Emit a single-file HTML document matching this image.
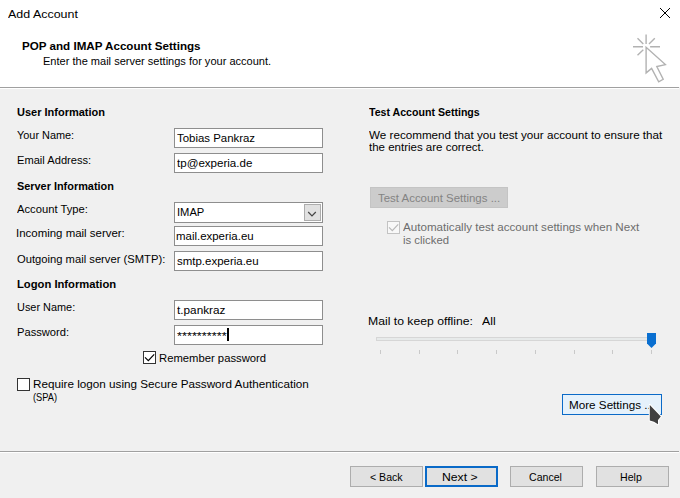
<!DOCTYPE html>
<html><head><meta charset="utf-8"><title>Add Account</title>
<style>
html,body{margin:0;padding:0;}
body{width:680px;height:498px;position:relative;overflow:hidden;background:#f0f0f0;font-family:"Liberation Sans",sans-serif;font-size:12px;color:#000;}
.hdr{position:absolute;left:0;top:0;width:680px;height:87px;background:#fff;}
.hl{position:absolute;left:0;top:87px;width:679px;height:1px;background:#a0a0a0;box-shadow:0 1px 0 #fff;}
.t{position:absolute;white-space:nowrap;transform-origin:0 0;z-index:2;}
.in{position:absolute;left:174px;width:147px;height:18px;border:1px solid #8e8e8e;background:#fff;}
.btn{position:absolute;height:19px;border:1px solid #adadad;background:#e1e1e1;}
.cb{position:absolute;width:11px;height:11px;border:1px solid #333;background:#fff;}
.cb svg{position:absolute;left:0;top:0;}
.tk{position:absolute;top:350px;width:1px;height:4px;background:#c9c9c9;}
</style></head><body>
<div class="hdr"></div><div class="hl"></div>
<svg style="position:absolute;left:659px;top:7px" width="12" height="12" viewBox="0 0 12 12"><path d="M1 1L11 11M11 1L1 11" stroke="#000" stroke-width="1" fill="none"/></svg>
<svg style="position:absolute;left:624px;top:26px" width="52" height="60" viewBox="624 26 52 60">
<g stroke="#b2b2b2" stroke-width="1.4" fill="none">
<path d="M646.1 34.4V44M633 46.8H643M650.1 46.8H660M637.5 38.2L643.3 44M654.8 38.2L649 44M637.5 55.3L643.3 49.8"/>
<path d="M646.1 47.2V72.9L651.6 68.4L658.7 81.9L663.2 79.3L656.8 66.5L665.4 64.6Z" fill="#fff"/>
</g></svg>

<div class="in" style="top:128px"></div>
<div class="in" style="top:153px"></div>
<div class="in" style="top:202px;height:19px">
<div style="position:absolute;left:129px;top:1px;width:15px;height:15px;border:1px solid #adadad;background:#e1e1e1"></div>
<svg style="position:absolute;left:132px;top:7.5px" width="10" height="7" viewBox="0 0 10 7"><path d="M1.2 1L5 4.8L8.8 1" stroke="#444" stroke-width="1.2" fill="none"/></svg>
</div>
<div class="in" style="top:226px"></div>
<div class="in" style="top:251px"></div>
<div class="in" style="top:300px"></div>
<div class="in" style="top:325px"><div style="position:absolute;left:51.6px;top:2px;width:2px;height:13px;background:#000"></div></div>

<div class="cb" style="left:143px;top:351px"><svg width="11" height="11" viewBox="0 0 11 11"><path d="M1 5.4L4.3 8.6L10.2 2.4" stroke="#000" stroke-width="1.2" fill="none"/></svg></div>
<div class="cb" style="left:17px;top:378px"></div>

<div class="btn" style="left:370px;top:187px;width:136px;background:#cccccc;border-color:#c4c4c4"></div>
<div class="cb" style="left:387px;top:221px;border-color:#c3c3c3;background:#f8f8f8"><svg width="11" height="11" viewBox="0 0 11 11"><path d="M1 5.4L4.3 8.6L10.2 2.4" stroke="#b8b8b8" stroke-width="1.2" fill="none"/></svg></div>

<div style="position:absolute;left:376px;top:337px;width:277px;height:2px;border:1px solid #d6d6d6;background:#e7eaea"></div>
<div class="tk" style="left:380px"></div><div class="tk" style="left:419px"></div><div class="tk" style="left:457px"></div><div class="tk" style="left:496px"></div><div class="tk" style="left:535px"></div><div class="tk" style="left:574px"></div><div class="tk" style="left:612px"></div><div class="tk" style="left:651px"></div>
<svg style="position:absolute;left:647px;top:333px" width="9" height="16" viewBox="0 0 9 16"><path d="M0 0H9V10.5L4.5 15L0 10.5Z" fill="#0a6fd0"/></svg>

<div class="btn" style="left:562px;top:394px;width:98px;border-color:#0a6ac8;background:#e5f1fb"></div>

<div class="hl" style="top:451px"></div>
<div class="btn" style="left:350px;top:466px;width:71px;"></div>
<div class="btn" style="left:425px;top:466px;width:69px;border:2px solid #0a6ac8;height:17px"></div>
<div class="btn" style="left:510px;top:466px;width:71px;"></div>
<div class="btn" style="left:596px;top:466px;width:71px;"></div>
<span class="t" id="title" style="left:7.88px;top:7px;font-size:11px;line-height:14px;transform:scaleX(1.1306);">Add Account</span>
<span class="t" id="h1" style="left:22.25px;top:39px;font-size:10.5px;line-height:14px;transform:scaleX(1.1062);font-weight:bold;">POP and IMAP Account Settings</span>
<span class="t" id="h2" style="left:42.74px;top:54px;font-size:10.5px;line-height:14px;transform:scaleX(1.0507);">Enter the mail server settings for your account.</span>
<span class="t" id="s1" style="left:16.61px;top:105px;font-size:10.5px;line-height:14px;transform:scaleX(1.0475);font-weight:bold;">User Information</span>
<span class="t" id="l1" style="left:16.84px;top:128px;font-size:10.5px;line-height:14px;transform:scaleX(1.0377);">Your Name:</span>
<span class="t" id="l2" style="left:16.56px;top:153px;font-size:10.5px;line-height:14px;transform:scaleX(1.0590);">Email Address:</span>
<span class="t" id="s2" style="left:16.97px;top:179px;font-size:10.5px;line-height:14px;transform:scaleX(1.0373);font-weight:bold;">Server Information</span>
<span class="t" id="l3" style="left:17.18px;top:202px;font-size:10.5px;line-height:14px;transform:scaleX(1.0675);">Account Type:</span>
<span class="t" id="l4" style="left:16.32px;top:226px;font-size:10.5px;line-height:14px;transform:scaleX(1.0903);">Incoming mail server:</span>
<span class="t" id="l5" style="left:16.78px;top:252px;font-size:10.5px;line-height:14px;transform:scaleX(1.0675);">Outgoing mail server (SMTP):</span>
<span class="t" id="s3" style="left:17.26px;top:277px;font-size:10.5px;line-height:14px;transform:scaleX(1.0689);font-weight:bold;">Logon Information</span>
<span class="t" id="l6" style="left:17.24px;top:300px;font-size:10.5px;line-height:14px;transform:scaleX(1.0390);">User Name:</span>
<span class="t" id="l7" style="left:16.56px;top:325px;font-size:10.5px;line-height:14px;transform:scaleX(1.0623);">Password:</span>
<span class="t" id="v1" style="left:176.97px;top:131px;font-size:10.5px;line-height:14px;transform:scaleX(1.0876);">Tobias Pankraz</span>
<span class="t" id="v2" style="left:176.72px;top:156px;font-size:10.5px;line-height:14px;transform:scaleX(1.1011);">tp@experia.de</span>
<span class="t" id="v3" style="left:177.17px;top:205px;font-size:10.5px;line-height:14px;transform:scaleX(1.0631);">IMAP</span>
<span class="t" id="v4" style="left:176.25px;top:229px;font-size:10.5px;line-height:14px;transform:scaleX(1.0902);">mail.experia.eu</span>
<span class="t" id="v5" style="left:176.86px;top:254px;font-size:10.5px;line-height:14px;transform:scaleX(1.0920);">smtp.experia.eu</span>
<span class="t" id="v6" style="left:176.59px;top:303px;font-size:10.5px;line-height:14px;transform:scaleX(1.1213);">t.pankraz</span>
<span class="t" id="v7" style="left:176.75px;top:329px;font-size:10.5px;line-height:14px;transform:scaleX(1.2153);">**********</span>
<span class="t" id="c1" style="left:158.52px;top:351px;font-size:10.5px;line-height:14px;transform:scaleX(1.0733);">Remember password</span>
<span class="t" id="c2" style="left:32.70px;top:377px;font-size:10.5px;line-height:14px;transform:scaleX(1.1142);">Require logon using Secure Password Authentication</span>
<span class="t" id="c3" style="left:33.41px;top:390px;font-size:10.5px;line-height:14px;transform:scaleX(0.8823);">(SPA)</span>
<span class="t" id="r1" style="left:369.27px;top:105px;font-size:10.5px;line-height:14px;transform:scaleX(1.0097);font-weight:bold;">Test Account Settings</span>
<span class="t" id="r2" style="left:368.96px;top:128px;font-size:10.5px;line-height:14px;transform:scaleX(1.1102);">We recommend that you test your account to ensure that</span>
<span class="t" id="r3" style="left:368.79px;top:140px;font-size:10.5px;line-height:14px;transform:scaleX(1.0944);">the entries are correct.</span>
<span class="t" id="tbt" style="left:378.21px;top:191px;font-size:10.5px;line-height:14px;transform:scaleX(1.0902);color:#838383;">Test Account Settings ...</span>
<span class="t" id="r4" style="left:402.97px;top:220px;font-size:10.5px;line-height:14px;transform:scaleX(1.1059);color:#6d6d6d;">Automatically test account settings when Next</span>
<span class="t" id="r5" style="left:403.19px;top:233px;font-size:10.5px;line-height:14px;transform:scaleX(1.0802);color:#6d6d6d;">is clicked</span>
<span class="t" id="m1" style="left:368.13px;top:314px;font-size:10.5px;line-height:14px;transform:scaleX(1.1630);">Mail to keep offline:</span>
<span class="t" id="m2" style="left:481.59px;top:314px;font-size:10.5px;line-height:14px;transform:scaleX(1.1661);">All</span>
<span class="t" id="mst" style="left:569.13px;top:398px;font-size:10.5px;line-height:14px;transform:scaleX(1.1118);">More Settings ...</span>
<span class="t" id="b1t" style="left:369.85px;top:470px;font-size:10.5px;line-height:14px;transform:scaleX(1.0075);">&lt; Back</span>
<span class="t" id="b2t" style="left:441.85px;top:470px;font-size:10.5px;line-height:14px;transform:scaleX(1.1622);">Next &gt;</span>
<span class="t" id="b3t" style="left:528.76px;top:470px;font-size:10.5px;line-height:14px;transform:scaleX(1.0067);">Cancel</span>
<span class="t" id="b4t" style="left:620.33px;top:470px;font-size:10.5px;line-height:14px;transform:scaleX(1.0089);">Help</span>
<svg style="position:absolute;left:640px;top:398px;z-index:5" width="30" height="32" viewBox="640 398 30 32"><path d="M649.8 405V420.6L654 421.8L658 424.2V420L660.8 416.5Z" fill="#404040" stroke="#fff" stroke-width="2" stroke-linejoin="round" paint-order="stroke"/></svg>
</body></html>
